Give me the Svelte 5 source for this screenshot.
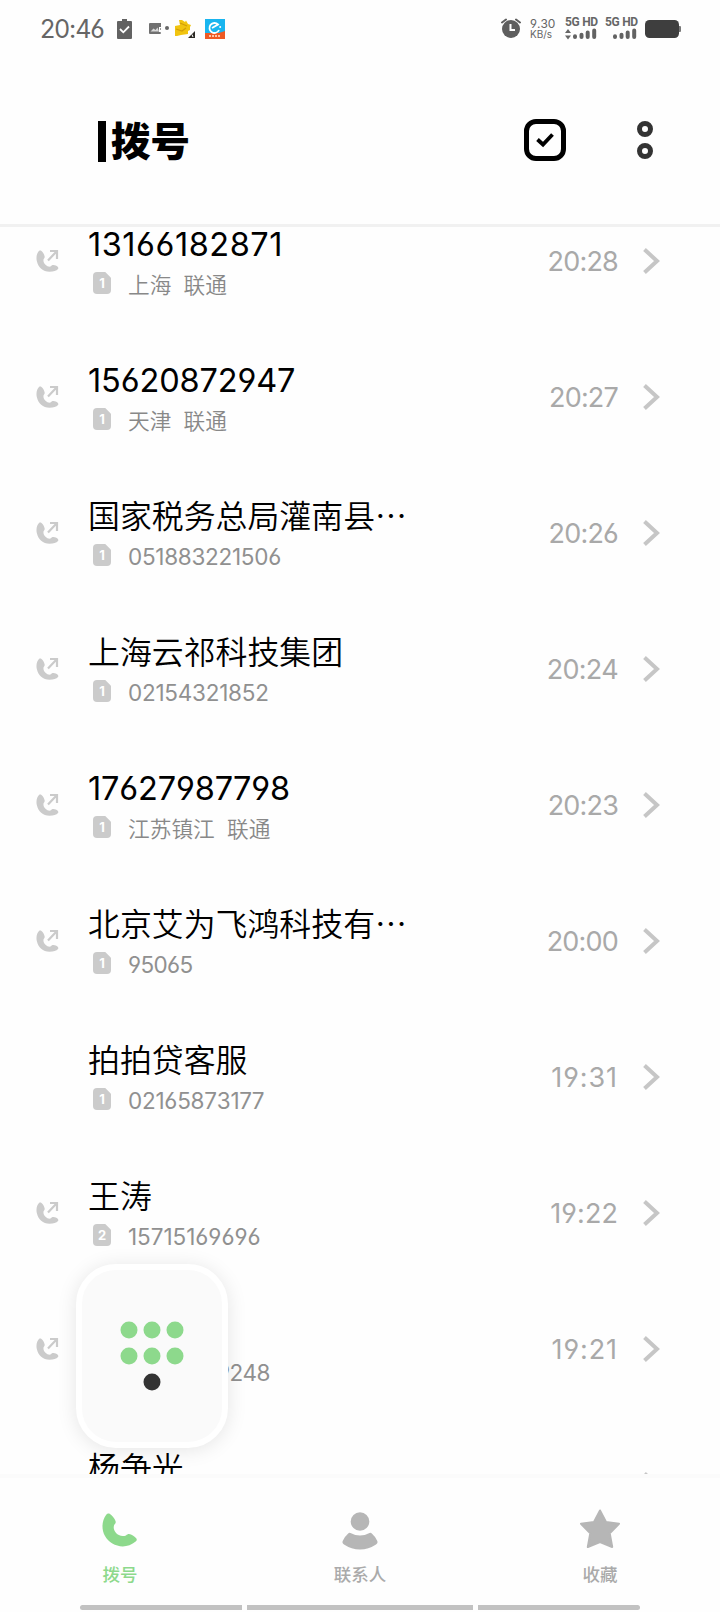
<script lang="ts">
	type Call = { name: string; info: string; time: string; sim: number; outgoing: boolean; partial?: boolean };

	const calls: Call[] = [
		{ name: '13166182871', info: '上海  联通', time: '20:28', sim: 1, outgoing: true },
		{ name: '15620872947', info: '天津  联通', time: '20:27', sim: 1, outgoing: true },
		{ name: '国家税务总局灌南县⋯', info: '051883221506', time: '20:26', sim: 1, outgoing: true },
		{ name: '上海云祁科技集团', info: '02154321852', time: '20:24', sim: 1, outgoing: true },
		{ name: '17627987798', info: '江苏镇江  联通', time: '20:23', sim: 1, outgoing: true },
		{ name: '北京艾为飞鸿科技有⋯', info: '95065', time: '20:00', sim: 1, outgoing: true },
		{ name: '拍拍贷客服', info: '02165873177', time: '19:31', sim: 1, outgoing: false },
		{ name: '王涛', info: '15715169696', time: '19:22', sim: 2, outgoing: true },
		{ name: '', info: '9248', time: '19:21', sim: 1, outgoing: true, partial: true },
		{ name: '杨争光', info: '', time: '', sim: 1, outgoing: true }
	];

	const isNumber = (s: string) => /^\d+$/.test(s);

	const tracking = (s: string, base: number, gain: number) => {
		if (!/^[\d:]+$/.test(s)) return null;
		const ones = s.split('1').length - 1;
		return (base + (gain * ones) / s.length).toFixed(4) + 'em';
	};
</script>

<div class="phone">
	<div class="status">
		<span class="clock">20:46</span>
		<svg class="clipboard" width="15" height="20" viewBox="0 0 15 20">
			<path d="M1 2h4V0h5v2h4q1 0 1 1v16q0 1-1 1H1q-1 0-1-1V3q0-1 1-1z" fill="#626262" />
			<path d="M3 10l3.3 3.3L12 7.5" fill="none" stroke="#fff" stroke-width="1.8" />
		</svg>
		<svg class="picture" width="22" height="14" viewBox="0 0 22 14">
			<path d="M1 1h11v4h-2v5h2v2H1q-1 0-1-1V2q0-1 1-1z" fill="#707070" />
			<path d="M1.5 9.5l3-3 2 1.5 2-2.5 1.5 4z" fill="#d8d8d8" />
			<path d="M11.5 6v2M11.5 10v2" stroke="#999" />
			<circle cx="18" cy="6" r="2" fill="#666" />
		</svg>
		<svg class="bird" width="21" height="20" viewBox="0 0 21 20">
			<path d="M4 1l3 0 3 2 1-1.500 2 3.500 3 1-1 2 0 3-2 1v3l-7 1-4 1H0V7l5-1z" fill="#f1c40f" />
			<path d="M1 10l6 2 4-3M5 4l7 3" fill="none" stroke="#d39d09" stroke-width="1.2" />
			<path d="M20 12v7h-7z" fill="#2b2924" />
			<path d="M17 15.500l1 2.500" stroke="#fff" />
		</svg>
		<svg class="eleme" width="20" height="20" viewBox="0 0 20 20">
			<path d="M0 0h20v20H0z" fill="#19b5ef" />
			<path d="M0 14h14l6-2v8H0z" fill="#ee5a24" />
			<path d="M7 9l6-3.5A5 5 0 1 0 14 11" fill="none" stroke="#fff" stroke-width="1.8" />
			<circle cx="15.2" cy="8" r="1" fill="#fff" />
			<path d="M4 17h12" stroke="#ffc4a8" stroke-width="2" stroke-dasharray="2 1" />
		</svg>
		<span class="gap"></span>
		<svg class="alarm" width="20" height="21" viewBox="0 0 20 21">
			<circle cx="10" cy="11" r="9" fill="#5e5e5e" />
			<path d="M1 4.5l4-3M19 4.5l-4-3" stroke="#5e5e5e" stroke-width="2" stroke-linecap="round" />
			<path d="M9.5 6v6H14" fill="none" stroke="#fff" stroke-width="2" />
		</svg>
		<div class="speed"><span>9.30</span><small>KB/s</small></div>
		{#each [true, false] as data}
			<div class="signal">
				<span>5G HD</span>
				<svg width="32" height="12" viewBox="0 0 32 12">
					{#if data}
						<path d="M0 5l3-4 3 4zM0 7.5h6l-3 4z" fill="#666" />
					{/if}
					<path d="M10 8.3V9M16.5 6.8V9M22.7 4.500V9M29.2 2.500V9" stroke="#626262" stroke-width="4" stroke-linecap="round" />
				</svg>
			</div>
		{/each}
		<svg class="battery" width="36" height="18" viewBox="0 0 36 18">
			<rect x="33" y="6" width="3" height="6" rx="1" fill="#777" />
			<rect width="34" height="18" rx="4.5" fill="#3e3e3e" />
		</svg>
	</div>

	<header>
		<span class="mark"></span>
		<h1>拨号</h1>
		<svg class="select" width="42" height="42" viewBox="0 0 42 42">
			<rect x="2.5" y="2.5" width="37" height="37" rx="9.5" fill="none" stroke="#000" stroke-width="5" />
			<path d="M13.5 20.5l5.5 5 9.5-10" fill="none" stroke="#000" stroke-width="3.8" />
		</svg>
		<svg class="more" width="16" height="38" viewBox="0 0 16 38">
			<circle cx="8" cy="8" r="5.5" fill="none" stroke="#333" stroke-width="5" />
			<circle cx="8" cy="30" r="5.5" fill="none" stroke="#333" stroke-width="5" />
		</svg>
	</header>

	<main>
		{#each calls as call}
			<div class="row">
				<div class="type">
					{#if call.outgoing}
						<svg width="23" height="24" viewBox="0 0 23 24">
							<path d="M3 2C1.200 3.500-.2 7.500.8 12 2.200 18.500 7 22.700 13.500 22.700c4 0 7-1 8.500-2.700.6-.8.4-1.500-.3-2.200-1-1-2.700-1.800-4.200-1.800-1.500 0-2.300.6-3 1.500-1.500.5-3.500-.3-5-1.800-1.800-1.800-2.500-4-1.800-5.700.9-.8 1.200-1.500.9-2.700C8.200 5.500 7 3 5.500 2 4.700 1.400 3.700 1.400 3 2z" fill="#cbcbcb" />
							<path d="M12 11.500L20.500 2.500M14 2h7v8" fill="none" stroke="#cbcbcb" stroke-width="2.200" />
						</svg>
					{/if}
				</div>
				<div class="who">
					<div
						class="name"
						class:digits={isNumber(call.name)}
						style:letter-spacing={tracking(call.name, -0.011, 0.075)}
					>
						{call.name}
					</div>
					<div class="info" class:digits={isNumber(call.info)} class:partial={call.partial}>
						{#if call.info && !call.partial}
							<span class="sim">{call.sim}</span>
						{/if}
						<span class="detail" style:letter-spacing={tracking(call.info, -0.029, 0.1)}>{call.info}</span>
					</div>
				</div>
				<div class="time" style:letter-spacing={tracking(call.time, -0.03, 0.16)}>{call.time}</div>
				<svg class="chevron" width="17" height="26" viewBox="0 0 17 26">
					<path d="M1.500 1.500L14 13 1.500 24.500" fill="none" stroke="#c6c6c6" stroke-width="4" />
				</svg>
			</div>
		{/each}
	</main>

	<nav>
		<div class="tab active">
			<svg width="42" height="42" viewBox="0 0 42 42">
				<path d="M7.200 5.700C3 11 2 20 6 27c5.500 9.500 19.500 15 31 5.300 1-1 1-2 .2-3-2-2.300-4.500-3.800-7.200-4.300-1.200 0-2 .5-3 1.500-3.500 1.300-8 .3-10.500-3.200-2.200-3-2.300-6.200-.7-8.300 1-1 1.100-1.800.7-3C15.500 9.500 13.500 6.500 11 5c-1.400-.8-2.700-.6-3.800.7z" fill="#8dd98c" />
			</svg>
			<span>拨号</span>
		</div>
		<div class="tab">
			<svg width="42" height="42" viewBox="0 0 42 42">
				<circle cx="21" cy="12.500" r="9.300" fill="#b6b6b6" />
				<path d="M11.500 24q9.500 5 19 0 1.300-.5 2.300.5 3.500 3 5.500 7.500c.6 1.600 0 2.600-1.300 3.400q-7.500 5-16 5t-16-5c-1.300-.8-1.900-1.800-1.300-3.400q2-4.500 5.500-7.500 1-1 2.300-.5z" fill="#b6b6b6" />
			</svg>
			<span>联系人</span>
		</div>
		<div class="tab">
			<svg width="42" height="42" viewBox="0 0 42 42">
				<path d="M21 1.500l6 11.500 13 1.700-9.300 9.600L33.200 38 21 33 8.800 38l2.500-13.700L2 14.700 15 13z" fill="#b6b6b6" stroke="#b6b6b6" stroke-width="2" stroke-linejoin="round" />
			</svg>
			<span>收藏</span>
		</div>
	</nav>
	<div class="gesture"><i></i><i></i><i></i></div>

	<div class="dialpad">
		<svg width="64" height="70" viewBox="0 0 64 70">
			{#each [9, 32, 55] as x}
				<circle cx={x} cy="9" r="8.500" fill="#8dd98c" />
				<circle cx={x} cy="35" r="8.500" fill="#8dd98c" />
			{/each}
			<circle cx="32" cy="61" r="8.500" fill="#333" />
		</svg>
	</div>
</div>

<style>
	:global(body) {
		margin: 0;
		background: #fefefe;
	}

	.phone {
		position: relative;
		display: flex;
		flex-direction: column;
		width: 720px;
		height: 1612px;
		overflow: hidden;
		background: #fefefe;
		font-family: Inter, 'Noto Sans CJK SC', sans-serif;
		font-feature-settings: 'cv03', 'cv04';
		font-kerning: none;
	}

	.phone svg {
		display: block;
		flex: none;
	}

	.status {
		display: flex;
		align-items: center;
		box-sizing: border-box;
		height: 57px;
		padding: 0 40px;
		color: #666;
	}
	.clock {
		width: 77px;
		font-size: 25px;
		letter-spacing: -1px;
		white-space: nowrap;
	}
	.clipboard {
		margin-right: 17px;
	}
	.picture {
		margin-right: 4px;
	}
	.bird {
		margin-right: 9px;
	}
	.gap {
		flex: 1;
	}
	.alarm {
		margin-right: 9px;
	}
	.speed {
		display: flex;
		flex-direction: column;
		width: 35px;
		font-size: 12px;
		line-height: 11px;
	}
	.speed small {
		font-size: 10px;
		line-height: 10px;
	}
	.signal {
		width: 40px;
	}
	.signal span {
		display: block;
		font: bold 12px/11px Roboto, sans-serif;
		letter-spacing: -0.3px;
		white-space: nowrap;
	}
	.battery {
		margin-right: -1px;
	}

	header {
		display: flex;
		align-items: center;
		box-sizing: border-box;
		height: 170px;
		padding: 0 67px 1px 98px;
		border-bottom: 3px solid #f1f1f1;
	}
	.mark {
		width: 8px;
		height: 41px;
		margin: 3px 5px 0 0;
		background: #000;
	}
	h1 {
		flex: 1;
		margin: 0;
		padding-top: 3px;
		font-size: 39.5px;
		font-weight: 900;
		line-height: 48px;
	}
	.select {
		margin-right: 71px;
	}

	main {
		height: 1247px;
		overflow: hidden;
	}
	.row {
		display: grid;
		grid-template-columns: 36px 52px 1fr auto 42px 60px;
		align-items: center;
		height: 136px;
	}
	.row:first-child {
		margin-top: -34px;
	}
	.type {
		grid-column: 2;
	}
	.name {
		height: 44px;
		padding-top: 2px;
		font-size: 31.9px;
		font-weight: 350;
		line-height: 44px;
		color: #000;
		white-space: nowrap;
	}
	.name.digits {
		font-size: 32.5px;
		font-weight: 400;
	}
	.info {
		display: flex;
		align-items: center;
		box-sizing: border-box;
		height: 34px;
		padding-bottom: 2px;
		font-size: 21.7px;
		font-weight: 350;
		color: #888;
		white-space: pre;
	}
	.info.digits {
		font-size: 22.5px;
		font-weight: 400;
		color: #909090;
	}
	.info.digits .detail {
		padding-top: 3px;
	}
	.info.partial {
		padding-left: 129px;
	}
	.sim {
		width: 18px;
		height: 22px;
		margin: 0 17px 0 5px;
		border-radius: 4px;
		clip-path: polygon(0 0, 68% 0, 100% 26%, 100% 100%, 0 100%);
		background: #cbcbcb;
		color: #fff;
		font-size: 13px;
		font-weight: 700;
		line-height: 22px;
		text-align: center;
	}
	.time {
		color: #a9a9a9;
		font-size: 27px;
	}
	.chevron {
		justify-self: end;
	}

	nav {
		display: grid;
		grid-template-columns: repeat(3, 1fr);
		box-sizing: border-box;
		height: 131px;
		border-top: 4px solid #fbfbfb;
	}
	.tab {
		display: flex;
		flex-direction: column;
		align-items: center;
		padding-top: 31px;
		color: #aaa;
		font-size: 17.5px;
		font-weight: 500;
		line-height: 26px;
	}
	.tab span {
		margin-top: 11px;
	}
	.tab.active {
		color: #8dd98c;
	}

	.gesture {
		display: grid;
		grid-template-columns: 162px 226px 162px;
		gap: 5px;
		padding: 0 80px;
	}
	.gesture i {
		height: 5px;
		background: #c2c2c2;
	}
	.gesture i:first-child {
		border-radius: 3px 0 0 3px;
	}
	.gesture i:last-child {
		border-radius: 0 3px 3px 0;
	}

	/* floats over the call list */
	.dialpad {
		position: absolute;
		left: 76px;
		top: 1264px;
		display: flex;
		align-items: center;
		justify-content: center;
		box-sizing: border-box;
		width: 152px;
		height: 184px;
		border: 6px solid #fff;
		border-radius: 40px;
		background: #fafafa;
		box-shadow: 0 2px 20px rgba(0, 0, 0, 0.1);
	}
</style>
